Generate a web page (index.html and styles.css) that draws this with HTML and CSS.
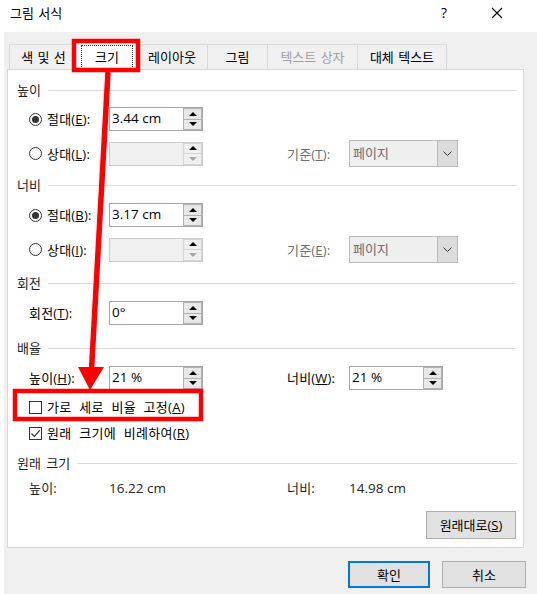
FILE: index.html
```html
<!DOCTYPE html>
<html lang="ko">
<head>
<meta charset="utf-8">
<title>그림 서식</title>
<link rel="stylesheet" href="styles.css">
</head>
<body>
<header class="titlebar">
  <span class="title">그림 서식</span>
  <span class="help">?</span>
  <span class="close"><svg width="12" height="12" viewBox="0 0 12 12"><path d="M1 1L11 11M11 1L1 11" stroke="#000" stroke-width="1.1" fill="none"/></svg></span>
</header>
<div class="dialog">
  <div class="tabs">
    <div class="tab t1">색 및 선</div>
    <div class="tab t2 active"><span class="focus">크기</span></div>
    <div class="tab t3">레이아웃</div>
    <div class="tab t4">그림</div>
    <div class="tab t5 disabled">텍스트 상자</div>
    <div class="tab t6">대체 텍스트</div>
  </div>
  <div class="panel">
    <section class="group g1">
      <div class="legend"><span>높이</span></div>
      <div class="row">
        <label class="opt"><span class="radio on"></span><span class="opt-text">절대(<u>E</u>):</span></label>
        <div class="spin"><span class="val">3.44 cm</span><span class="arrows"><i class="up"></i><i class="down"></i></span></div>
      </div>
      <div class="row">
        <label class="opt"><span class="radio"></span><span class="opt-text">상대(<u>L</u>):</span></label>
        <div class="spin disabled"><span class="val"></span><span class="arrows"><i class="up"></i><i class="down"></i></span></div>
        <span class="ref-label">기준(<u>T</u>):</span>
        <div class="combo"><span class="combo-text">페이지</span><span class="drop"><svg width="9" height="5" viewBox="0 0 9 5"><path d="M0.5 0.5L4.5 4.5L8.5 0.5" stroke="#333" fill="none"/></svg></span></div>
      </div>
    </section>
    <section class="group g2">
      <div class="legend"><span>너비</span></div>
      <div class="row">
        <label class="opt"><span class="radio on"></span><span class="opt-text">절대(<u>B</u>):</span></label>
        <div class="spin"><span class="val">3.17 cm</span><span class="arrows"><i class="up"></i><i class="down"></i></span></div>
      </div>
      <div class="row">
        <label class="opt"><span class="radio"></span><span class="opt-text">상대(<u>I</u>):</span></label>
        <div class="spin disabled"><span class="val"></span><span class="arrows"><i class="up"></i><i class="down"></i></span></div>
        <span class="ref-label">기준(<u>E</u>):</span>
        <div class="combo"><span class="combo-text">페이지</span><span class="drop"><svg width="9" height="5" viewBox="0 0 9 5"><path d="M0.5 0.5L4.5 4.5L8.5 0.5" stroke="#333" fill="none"/></svg></span></div>
      </div>
    </section>
    <section class="group g3">
      <div class="legend"><span>회전</span></div>
      <div class="row">
        <label class="lbl">회전(<u>T</u>):</label>
        <div class="spin"><span class="val">0°</span><span class="arrows"><i class="up"></i><i class="down"></i></span></div>
      </div>
    </section>
    <section class="group g4">
      <div class="legend"><span>배율</span></div>
      <div class="row">
        <label class="lbl">높이(<u>H</u>):</label>
        <div class="spin"><span class="val">21 %</span><span class="arrows"><i class="up"></i><i class="down"></i></span></div>
        <label class="lbl right">너비(<u>W</u>):</label>
        <div class="spin"><span class="val">21 %</span><span class="arrows"><i class="up"></i><i class="down"></i></span></div>
      </div>
      <div class="check-row cb1">
        <span class="checkbox"></span><span class="check-text">가로 세로 비율 고정(<u>A</u>)</span>
      </div>
      <div class="check-row cb2">
        <span class="checkbox checked"><svg width="11" height="11" viewBox="0 0 11 11"><path d="M1.5 5.5L4.3 8.3L9.8 2.3" stroke="#333" stroke-width="1.2" fill="none"/></svg></span><span class="check-text">원래 크기에 비례하여(<u>R</u>)</span>
      </div>
    </section>
    <section class="group g5">
      <div class="legend"><span>원래 크기</span></div>
      <div class="info-row">
        <span class="lbl">높이:</span>
        <span class="info-val">16.22 cm</span>
        <span class="lbl right">너비:</span>
        <span class="info-val">14.98 cm</span>
      </div>
      <div class="reset-row">
        <button class="btn reset">원래대로(<u>S</u>)</button>
      </div>
    </section>
  </div>
  <div class="footer">
    <button class="btn ok">확인</button>
    <button class="btn cancel">취소</button>
  </div>
</div>
<svg class="annot" width="537" height="594" viewBox="0 0 537 594">
  <rect x="74" y="41" width="64" height="29" fill="none" stroke="#ff0000" stroke-width="4.5"/>
  <rect x="15" y="391" width="186" height="28" fill="none" stroke="#ff0000" stroke-width="4.5"/>
  <path d="M108 72L91.5 370" stroke="#ff0000" stroke-width="5.5" fill="none"/>
  <polygon points="78,367 104,367 90,390" fill="#ff0000"/>
</svg>
</body>
</html>
```
FILE: styles.css
```css
* { box-sizing: border-box; }
html, body { margin: 0; padding: 0; }
body {
  width: 537px;
  height: 594px;
  background: #fff;
  font-family: "Open Sans", "Noto Sans CJK KR", sans-serif;
  font-size: 13px;
  color: #000;
  position: relative;
  overflow: hidden;
}
u { text-decoration: underline; text-underline-offset: 1px; }

.titlebar {
  height: 32px;
  display: flex;
  align-items: flex-start;
  padding: 4px 0 0 10px;
  line-height: 18px;
}
.title { font-size: 13px; word-spacing: 1px; }
.help { margin-left: auto; width: 10px; text-align: center; font-size: 14px; }
.close { margin-left: 42px; margin-right: 34px; width: 12px; height: 12px; margin-top: 3px; display: flex; }

.dialog {
  margin-left: 4px;
  height: 562px;
  background: #f0f0f0;
  padding: 10px 0 0 3px;
}

.tabs {
  display: flex;
  align-items: flex-end;
  height: 27px;
  padding-left: 2px;
  position: relative;
  z-index: 1;
}
.tab {
  height: 25px;
  border: 1px solid #d9d9d9;
  border-bottom: none;
  margin-right: -1px;
  display: flex;
  align-items: center;
  justify-content: center;
  line-height: 17px;
  background: #f0f0f0;
  white-space: nowrap;
  word-spacing: 1px;
}
.t1 { width: 69px; }
.t3 { width: 72px; }
.t4 { width: 61px; }
.t5 { width: 91px; }
.t6 { width: 90px; }
.tab.active {
  width: 64px;
  height: 28px;
  margin: 0 -3px -1px -2px;
  background: #fff;
  position: relative;
  z-index: 2;
}
.focus {
  display: flex;
  align-items: center;
  justify-content: center;
  width: 50px;
  height: 22px;
  outline: 1px dotted #333;
  margin-top: 1px;
}
.tab.disabled { color: #a0a0a0; }

.panel {
  width: 517px;
  height: 479px;
  background: #fff;
  border: 1px solid #d9d9d9;
  padding-top: 10px;
}

.legend {
  display: flex;
  align-items: center;
  height: 20px;
  padding: 0 6px 0 9px;
  color: #1e1e1e;
  line-height: 18px;
  word-spacing: 2px;
}
.legend::after {
  content: "";
  flex: 1;
  height: 1px;
  background: #dcdcdc;
  margin-left: 7px;
}

.g2 { margin-top: 11px; }
.g3 { margin-top: 13px; }
.g4 { margin-top: 13px; }
.g5 { margin-top: 10px; }

.row, .info-row {
  display: grid;
  grid-template-columns: 80px 94px 84px 62px 109px;
  align-items: center;
  height: 24px;
  padding-left: 21px;
  line-height: 18px;
}
.legend + .row { margin-top: 8px; }
.g1 .legend + .row { margin-top: 7px; }
.row + .row { margin-top: 9px; }

.opt { display: flex; align-items: center; gap: 5px; white-space: nowrap; }
.opt-text, .lbl { white-space: nowrap; letter-spacing: 0.2px; }
.row .right, .info-row .right { grid-column: 4; }
.ref-label { grid-column: 4; color: #6d6d6d; white-space: nowrap; letter-spacing: 0.2px; }
.combo { grid-column: 5; }

.radio {
  width: 13px;
  height: 13px;
  border: 1px solid #333;
  border-radius: 50%;
  background: #fff;
  display: flex;
  align-items: center;
  justify-content: center;
  flex: none;
}
.radio.on::after {
  content: "";
  width: 7px;
  height: 7px;
  border-radius: 50%;
  background: #333;
}

.spin {
  display: flex;
  align-items: stretch;
  width: 94px;
  height: 24px;
  border: 1px solid #a7a7a7;
  background: #fff;
}
.val { flex: 1; padding-left: 2px; line-height: 21px; white-space: nowrap; font-size: 13.5px; }
.arrows { display: flex; flex-direction: column; width: 19px; }
.arrows i {
  flex: 1;
  border: 1px solid #b2b2b2;
  background: #e8e8e8;
  display: flex;
  align-items: center;
  justify-content: center;
}
.arrows i + i { border-top: none; }
.arrows .up::before {
  content: "";
  border-left: 4px solid transparent;
  border-right: 4px solid transparent;
  border-bottom: 4px solid #000;
}
.arrows .down::before {
  content: "";
  border-left: 4px solid transparent;
  border-right: 4px solid transparent;
  border-top: 4px solid #000;
}
.spin.disabled { background: #f0f0f0; border-color: #cccccc; }
.spin.disabled .arrows i { background: #f0f0f0; border-color: #d4d4d4; }
.spin.disabled .arrows .down::before { border-top-color: #a6a6a6; }

.combo {
  display: flex;
  align-items: stretch;
  width: 109px;
  height: 27px;
  border: 1px solid #b9b9b9;
  background: #efefef;
  color: #6d6d6d;
}
.combo-text { flex: 1; padding-left: 3px; line-height: 25px; }
.drop {
  width: 20px;
  border-left: 1px solid #b9b9b9;
  background: #dcdcdc;
  display: flex;
  align-items: center;
  justify-content: center;
}

.check-row {
  display: flex;
  align-items: center;
  gap: 5px;
  height: 20px;
  padding-left: 21px;
  line-height: 18px;
}
.cb1 { margin-top: 7px; }
.cb2 { margin-top: 6px; }
.checkbox {
  width: 13px;
  height: 13px;
  border: 1px solid #333;
  background: #fff;
  display: flex;
  align-items: center;
  justify-content: center;
  flex: none;
}
.check-text { white-space: nowrap; word-spacing: 4px; letter-spacing: 0.3px; }

.info-row { height: 20px; margin-top: 5px; color: #262626; }
.info-val { white-space: nowrap; font-size: 13.5px; }

.reset-row {
  display: flex;
  justify-content: flex-end;
  padding-right: 7px;
  margin-top: 13px;
}
.btn {
  font-family: "Open Sans", "Noto Sans CJK KR", sans-serif;
  font-size: 13px;
  color: #000;
  height: 28px;
  border: 1px solid #adadad;
  background: #e1e1e1;
  padding: 0;
  line-height: 18px;
}
.reset { width: 90px; }

.footer {
  display: flex;
  justify-content: flex-end;
  gap: 12px;
  margin-top: 13px;
  padding-right: 11px;
}
.ok { width: 82px; height: 27px; border: 2px solid #0078d7; }
.cancel { width: 84px; height: 27px; }

.annot {
  position: absolute;
  top: 0;
  left: 0;
  z-index: 10;
  pointer-events: none;
}
```
